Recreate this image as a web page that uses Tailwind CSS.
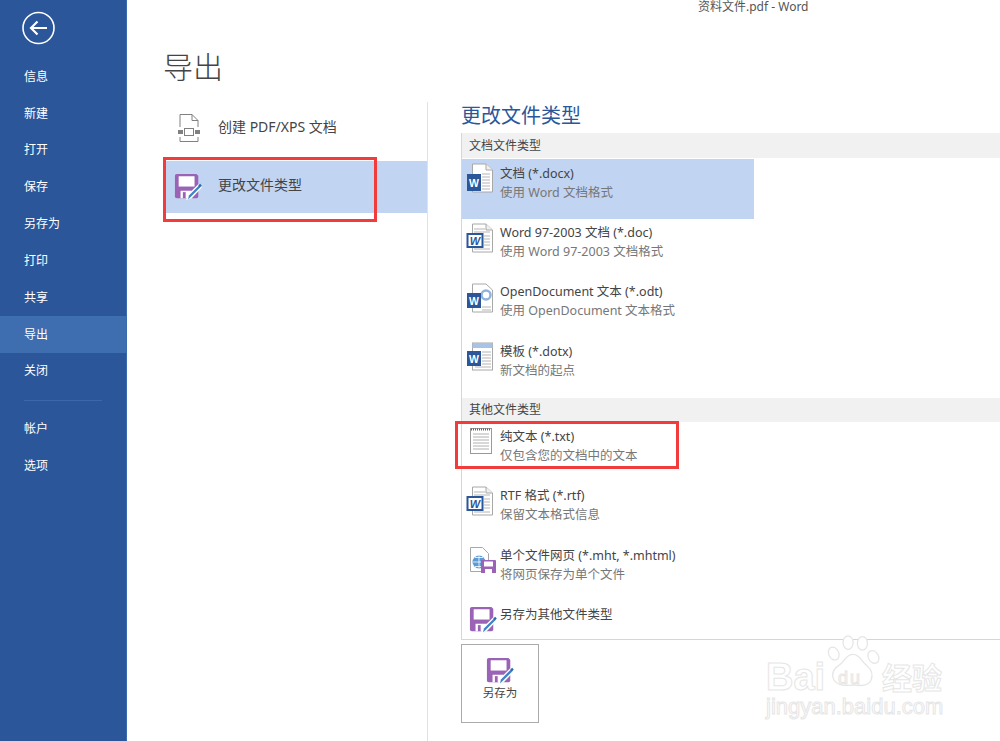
<!DOCTYPE html>
<html lang="zh-CN">
<head>
    <meta charset="UTF-8">
    <meta name="viewport" content="width=device-width, initial-scale=1.0">
    <title>资料文件.pdf - Word</title>
    <script src="https://cdn.jsdelivr.net/npm/@tailwindcss/browser@4"></script>
</head>
<body class="bg-white overflow-hidden font-['Noto_Sans','Noto_Sans_CJK_SC',sans-serif]">
    <svg class="hidden">
        <symbol id="floppy" viewBox="0 0 30 30">
            <path d="M1 3a2 2 0 0 1 2-2h21l2 2v22a2 2 0 0 1-2 2H3a2 2 0 0 1-2-2z" fill="#9a63b5"/>
            <rect x="5" y="3.500" width="17" height="11" fill="#fff"/>
            <rect x="7" y="19" width="12" height="8" fill="#fff"/>
            <rect x="9.500" y="20.500" width="3" height="6.500" fill="#9a63b5"/>
            <path d="M13 29l2-6L26 12l4 3.500-11 11.500z" fill="#fff"/>
            <path d="M15 28.500l1-4.500 11-11 1.800 1.800-11 11z" fill="#3f83c6"/>
            <path d="M26 13.500l2-2 1.800 1.800-2 2z" fill="#2b6cb0"/>
        </symbol>
        <symbol id="wordDoc" viewBox="0 0 28 30">
            <path d="M6.500 1H20l6.500 6v22H6.500z" fill="#fff" stroke="#a8a8a8"/>
            <path d="M20 1v6h6.500" fill="#f0f0f0" stroke="#a8a8a8"/>
            <path d="M16 11h8M16 14h8M16 17h8M16 20h8M16 23h8M16 26h8" stroke="#b5b5b5"/>
            <rect x="1" y="11" width="14" height="17" fill="#2b579a"/>
            <text x="8" y="24" text-anchor="middle" font-size="10.500" font-weight="700" fill="#fff" font-family="Liberation Sans">W</text>
        </symbol>
        <symbol id="wordOld" viewBox="0 0 28 30">
            <path d="M6.500 1H20l6.500 6v22H6.500z" fill="#fff" stroke="#a8a8a8"/>
            <path d="M20 1v6h6.500" fill="#f0f0f0" stroke="#a8a8a8"/>
            <path d="M8 6h11M8 9h16M18 13h6M18 16h6M18 19h6M18 22h6M8 26h16" stroke="#b5b5b5"/>
            <rect x="1.500" y="11" width="15" height="13" fill="#fff" stroke="#2b579a" stroke-width="2"/>
            <text x="9" y="21.500" text-anchor="middle" font-size="11" font-weight="700" font-style="italic" fill="#2b579a" font-family="Liberation Sans">W</text>
        </symbol>
    </svg>

    <div class="flex h-[741px] w-[1000px] relative">
        <!-- Left menu -->
        <aside class="w-[127px] h-full shrink-0 bg-[#2b579a] border-r border-[#3a6bb0] text-white text-[12px]">
            <div class="h-[57px] pl-[22px] pt-[11px]">
                <svg class="w-[33px] h-[34px]" viewBox="0 0 33 33" fill="none" stroke="#fff">
                    <circle cx="16.500" cy="16.500" r="15.500" stroke-width="1.600"/>
                    <path d="M9 16.500h16M15.500 10l-6.500 6.500 6.500 6.500" stroke-width="2.200"/>
                </svg>
            </div>
            <nav>
                <a class="block h-[37px] leading-[39px] pl-6">信息</a>
                <a class="block h-[37px] leading-[39px] pl-6">新建</a>
                <a class="block h-[37px] leading-[37px] pl-6">打开</a>
                <a class="block h-[37px] leading-[37px] pl-6">保存</a>
                <a class="block h-[37px] leading-[37px] pl-6">另存为</a>
                <a class="block h-[37px] leading-[37px] pl-6">打印</a>
                <a class="block h-[37px] leading-[37px] pl-6">共享</a>
                <a class="block h-[37px] leading-[37px] pl-6 bg-[#3e6db0]">导出</a>
                <a class="block h-[37px] leading-[36px] pl-6">关闭</a>
                <div class="ml-6 mr-6 mt-[10px] mb-[9px] h-px bg-[#3a68a8]"></div>
                <a class="block h-[37px] leading-[37px] pl-6">帐户</a>
                <a class="block h-[37px] leading-[37px] pl-6">选项</a>
            </nav>
        </aside>

        <main class="flex-1 min-w-0">
            <div class="h-[14px] leading-[14px] pl-[571px] text-[12px] text-[#555] whitespace-nowrap">资料文件.pdf - Word</div>
            <h1 class="mt-[31px] ml-[36px] h-[57px] text-[30px] leading-[44px] font-light text-[#444]">导出</h1>

            <div class="flex">
                <!-- Export options -->
                <div class="w-[301px] h-[639px] border-r border-[#e1e1e1] shrink-0 pl-[37px] text-[14px] text-[#444]">
                    <div class="h-[51px] mb-[8px] flex items-center">
                        <svg class="w-[24px] h-[30px] ml-[13px] mr-[17px]" viewBox="0 0 24 30" fill="none" stroke="#808080">
                            <path d="M3 14V1.500h12l6 6V14M3 24v4.500h18V24M15 1.500v6h6"/>
                            <rect x="1" y="17" width="5" height="4" fill="#808080" stroke="none"/>
                            <rect x="18" y="17" width="5" height="4" fill="#808080" stroke="none"/>
                            <rect x="7.500" y="15.500" width="9" height="7"/>
                        </svg>
                        <span class="mb-[2px]">创建 PDF/XPS 文档</span>
                    </div>
                    <div class="h-[52px] flex items-center bg-[#c1d4f1]">
                        <svg class="w-[28px] h-[28px] ml-[10px] mr-[16px]"><use href="#floppy"/></svg>
                        <span class="mb-[6px]">更改文件类型</span>
                    </div>
                </div>

                <!-- File types -->
                <div class="flex-1 pl-[33px]">
                    <h2 class="h-[31px] text-[20px] leading-[28px] text-[#2b579a]">更改文件类型</h2>
                    <div class="border-l border-b border-[#d6d6d6] h-[507px]">
                        <div class="h-[25px] leading-[26px] pl-[7px] bg-[#f1f1f1] text-[12px] text-[#444]">文档文件类型</div>
                        <div class="h-[60px] w-[292px] flex bg-[#c1d4f1] mt-px">
                            <svg class="w-[28px] h-[30px] mt-[4px] ml-[4px]"><use href="#wordDoc"/></svg>
                            <div class="ml-[6px] mt-[5px] text-[12.500px] leading-[19px]"><p class="text-[#444]">文档 (*.docx)</p><p class="text-[#777]">使用 Word 文档格式</p></div>
                        </div>
                        <div class="h-[60px] flex">
                            <svg class="w-[28px] h-[30px] mt-[4px] ml-[4px]"><use href="#wordOld"/></svg>
                            <div class="ml-[6px] mt-[4px] text-[12.500px] leading-[19px]"><p class="text-[#444]">Word 97-2003 文档 (*.doc)</p><p class="text-[#777]">使用 Word 97-2003 文档格式</p></div>
                        </div>
                        <div class="h-[60px] flex">
                            <svg class="w-[28px] h-[30px] mt-[4px] ml-[4px]" viewBox="0 0 28 30">
                                <path d="M6.500 1H20l6.500 6v22H6.500z" fill="#fff" stroke="#a8a8a8"/>
                                <circle cx="20" cy="12" r="4.500" fill="none" stroke="#8fb3dc" stroke-width="2.500"/>
                                <path d="M16 24h9M16 27h9" stroke="#b5b5b5"/>
                                <rect x="1" y="10" width="14" height="15" fill="#2b579a"/>
                                <text x="8" y="22" text-anchor="middle" font-size="10.500" font-weight="700" fill="#fff" font-family="Liberation Sans">W</text>
                            </svg>
                            <div class="ml-[6px] mt-[3px] text-[12.500px] leading-[19px]"><p class="text-[#444]">OpenDocument 文本 (*.odt)</p><p class="text-[#777]">使用 OpenDocument 文本格式</p></div>
                        </div>
                        <div class="h-[59px] flex">
                            <svg class="w-[28px] h-[30px] mt-[3px] ml-[4px]" viewBox="0 0 28 30">
                                <rect x="6.500" y="1" width="20" height="27" fill="#fff" stroke="#a8a8a8"/>
                                <rect x="6.500" y="1" width="20" height="5" fill="#a9c3e6"/>
                                <path d="M16 10h9M16 13h9M16 16h9M16 19h9M16 22h9M9 25h16" stroke="#b5b5b5"/>
                                <rect x="1" y="9" width="14" height="15" fill="#2b579a"/>
                                <text x="8" y="21" text-anchor="middle" font-size="10.500" font-weight="700" fill="#fff" font-family="Liberation Sans">W</text>
                            </svg>
                            <div class="ml-[6px] mt-[3px] text-[12.500px] leading-[19px]"><p class="text-[#444]">模板 (*.dotx)</p><p class="text-[#777]">新文档的起点</p></div>
                        </div>
                        <div class="h-[24px] leading-[24px] pl-[7px] bg-[#f1f1f1] text-[12px] text-[#444]">其他文件类型</div>
                        <div class="h-[61px] flex">
                            <svg class="w-[24px] h-[28px] mt-[5px] ml-[7px]" viewBox="0 0 24 28" fill="none">
                                <rect x="1.500" y="1.500" width="21" height="25" fill="#fff" stroke="#999"/>
                                <path d="M2 2.500h20" stroke="#666" stroke-dasharray="1 1" stroke-width="2"/>
                                <path d="M4 7h16M4 10h16M4 13h16M4 16h16M4 19h16M4 22h16" stroke="#b0b0b0"/>
                            </svg>
                            <div class="ml-[7px] mt-[5px] text-[12.500px] leading-[19px]"><p class="text-[#444]">纯文本 (*.txt)</p><p class="text-[#777]">仅包含您的文档中的文本</p></div>
                        </div>
                        <div class="h-[60px] flex">
                            <svg class="w-[28px] h-[30px] mt-[3px] ml-[4px]"><use href="#wordOld"/></svg>
                            <div class="ml-[6px] mt-[3px] text-[12.500px] leading-[19px]"><p class="text-[#444]">RTF 格式 (*.rtf)</p><p class="text-[#777]">保留文本格式信息</p></div>
                        </div>
                        <div class="h-[61px] flex">
                            <svg class="w-[28px] h-[28px] mt-[3px] ml-[7px]" viewBox="0 0 28 28">
                                <path d="M1.500 1.500h12l6 6v18h-18z" fill="#fff" stroke="#a8a8a8"/>
                                <circle cx="10" cy="16" r="6.500" fill="#5b9bd5"/>
                                <path d="M4 16h12M10 9.500v13M6 11.500h8M6 20.500h8" stroke="#fff" stroke-width=".8"/>
                                <path d="M12 14h14a1 1 0 0 1 1 1v12H12z" fill="#9a63b5"/>
                                <rect x="15" y="15.500" width="9" height="5" fill="#fff"/>
                                <rect x="16" y="23" width="7" height="4" fill="#fff"/>
                            </svg>
                            <div class="ml-[3px] mt-[3px] text-[12.500px] leading-[19px]"><p class="text-[#444]">单个文件网页 (*.mht, *.mhtml)</p><p class="text-[#777]">将网页保存为单个文件</p></div>
                        </div>
                        <div class="flex">
                            <svg class="w-[28px] h-[28px] mt-[2px] ml-[7px]"><use href="#floppy"/></svg>
                            <p class="ml-[3px] mt-[1px] text-[12.500px] leading-[19px] text-[#444]">另存为其他文件类型</p>
                        </div>
                    </div>
                    <button class="mt-[4px] w-[78px] h-[79px] border border-[#ababab] flex flex-col items-center pt-[12px] text-[11.500px] text-[#444]">
                        <svg class="w-[28px] h-[28px]"><use href="#floppy"/></svg>
                        <span class="leading-[16px]">另存为</span>
                    </button>
                </div>
            </div>
        </main>

        <!-- Red annotation boxes -->
        <div class="absolute left-[163px] top-[157px] w-[214px] h-[65px] border-[3px] border-[#f23c3c]"></div>
        <div class="absolute left-[455px] top-[421px] w-[224px] h-[48px] border-[3px] border-[#f23c3c]"></div>

        <!-- Watermark -->
        <div class="absolute left-[766px] top-[633px] w-[200px] h-[100px] text-transparent [-webkit-text-stroke:1px_#e6e6e6] font-['Liberation_Sans',sans-serif]">
            <svg class="absolute left-[61px] top-[2px] w-[54px] h-[54px]" viewBox="2 0 64 64" fill="#fff" stroke="#e6e6e6" stroke-width="1.500">
                <ellipse cx="10" cy="22" rx="6" ry="8" transform="rotate(-25 10 22)"/>
                <ellipse cx="27" cy="9" rx="6" ry="8"/>
                <ellipse cx="44" cy="10" rx="6" ry="8"/>
                <ellipse cx="57" cy="26" rx="6" ry="8" transform="rotate(-30 57 26)"/>
                <path d="M33 23c8 0 10 9 16 13 6 5 8 11 5 18-3 6-10 7-21 5-10 2-20 0-23-6-3-7 0-13 6-17 7-4 8-13 17-13z"/>
            </svg>
            <span class="absolute left-0 top-[20px] text-[38px] leading-[48px] font-bold">Bai</span>
            <span class="absolute left-[72px] top-[36px] text-[18px] leading-[18px] tracking-[2px]">du</span>
            <span class="absolute left-[116px] top-[25px] text-[30px] leading-[36px] font-['Noto_Sans_CJK_SC',sans-serif] font-bold">经验</span>
            <span class="absolute left-0 top-[61px] text-[22px] leading-[26px] whitespace-nowrap">jingyan.baidu.com</span>
        </div>
    </div>
</body>
</html>
